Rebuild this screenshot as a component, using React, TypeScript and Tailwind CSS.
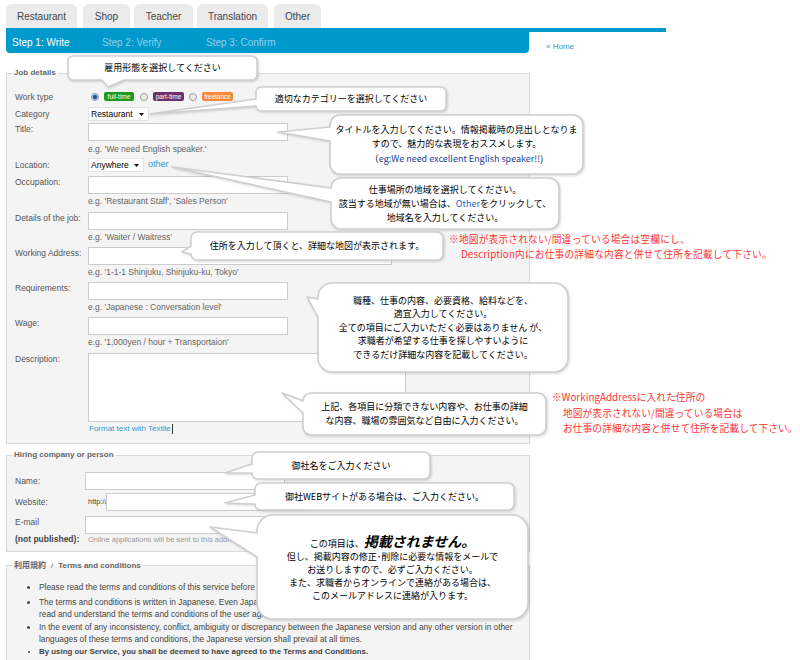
import React from "react";

type Tail = { side: "left" | "bottom"; a: number; b: number; tx: number; ty: number };

function bubblePath(w: number, h: number, r: number, t: Tail) {
  const arcTR = `A${r},${r} 0 0 1 ${w},${r}`;
  const arcBR = `A${r},${r} 0 0 1 ${w - r},${h}`;
  const arcBL = `A${r},${r} 0 0 1 0,${h - r}`;
  const arcTL = `A${r},${r} 0 0 1 ${r},0`;
  if (t.side === "left") {
    return `M${r},0 H${w - r} ${arcTR} V${h - r} ${arcBR} H${r} ${arcBL} V${t.b} L${t.tx},${t.ty} L0,${t.a} V${r} ${arcTL} Z`;
  }
  return `M${r},0 H${w - r} ${arcTR} V${h - r} ${arcBR} H${t.b} L${t.tx},${t.ty} L${t.a},${h} H${r} ${arcBL} V${r} ${arcTL} Z`;
}

function Callout({
  cls,
  w,
  h,
  r,
  tail,
  children,
  textCls = "",
}: {
  cls: string;
  w: number;
  h: number;
  r: number;
  tail: Tail;
  children: React.ReactNode;
  textCls?: string;
}) {
  return (
    <div className={`absolute ${cls}`}>
      <svg
        className="absolute left-0 top-0 overflow-visible drop-shadow-[1px_1px_1px_rgba(0,0,0,0.16)]"
        width={w}
        height={h}
      >
        <path d={bubblePath(w, h, r, tail)} fill="#ffffff" stroke="#cfcfcf" strokeWidth={1.6} strokeLinejoin="round" />
      </svg>
      <div
        className={`relative flex h-full w-full flex-col items-center justify-center text-center text-[9px] text-black font-['Noto_Sans_CJK_JP',sans-serif] ${textCls}`}
      >
        {children}
      </div>
    </div>
  );
}

function Caret() {
  return (
    <svg width="5" height="3" viewBox="0 0 5 3">
      <path d="M0 0H5L2.5 3Z" fill="#111" />
    </svg>
  );
}

function Radio({ checked, cls }: { checked?: boolean; cls: string }) {
  return (
    <span
      className={`flex h-[8px] w-[8px] shrink-0 items-center justify-center rounded-full border border-[#9c9c9c] bg-[#ededed] ${cls}`}
    >
      {checked && <span className="h-[4px] w-[4px] rounded-full bg-[#1d4f91] ring-1 ring-[#8fb4dc]" />}
    </span>
  );
}

const lab = "w-[73px] shrink-0 text-[8.5px] leading-[12px] text-[#555]";
const inp = "h-[18px] border border-[#cccccc] bg-white";
const hint = "ml-[73px] h-[12px] text-[8.5px] leading-[12px] text-[#666]";

const tabs = [
  { label: "Restaurant", cls: "ml-[6px] w-[71px]" },
  { label: "Shop", cls: "ml-[6px] w-[47px]" },
  { label: "Teacher", cls: "ml-[4px] w-[59px]" },
  { label: "Translation", cls: "ml-[4px] w-[71px]" },
  { label: "Other", cls: "ml-[6px] w-[47px]" },
];

export default function App() {
  return (
    <div className="relative h-[660px] w-[800px] overflow-hidden bg-white font-['Liberation_Sans',Arial,sans-serif] text-[#333]">
      {/* Tabs */}
      <div className="flex h-[28px] items-end">
        {tabs.map((t) => (
          <div
            key={t.label}
            className={`flex h-[24px] items-center justify-center rounded-t-[6px] bg-[#ebebeb] text-[10px] text-[#444] ${t.cls}`}
          >
            {t.label}
          </div>
        ))}
      </div>
      <div className="ml-[6px] h-[4px] w-[660px] bg-[#0099cc]" />
      <div className="flex">
        <div className="ml-[6px] flex h-[21px] w-[523px] items-center rounded-b-[4px] bg-[#0099cc] pl-[6px] text-[10px]">
          <span className="w-[90px] text-white">Step 1: Write</span>
          <span className="w-[104px] text-[#8dd0ee]">Step 2: Verify</span>
          <span className="text-[#8dd0ee]">Step 3: Confirm</span>
        </div>
        <span className="ml-[17px] mt-[10px] text-[8px] leading-[10px] text-[#3399cc]">« Home</span>
      </div>

      {/* Job details */}
      <fieldset className="ml-[6px] mt-[14px] w-[524px] border border-[#d9d9d9] bg-[#f4f4f4] pb-[8px] pl-[8px] pr-[8px] pt-[10px]">
        <legend className="-ml-[3px] px-[2px] text-[8px] font-bold leading-[12px] text-[#666]">Job details</legend>

        <div className="flex h-[15px] items-center">
          <div className={lab}>Work type</div>
          <Radio checked cls="ml-[3px]" />
          <span className="ml-[5px] h-[9px] w-[30px] rounded-[2px] bg-[#1e9a1e] text-center text-[6.5px] leading-[9px] text-white">full-time</span>
          <Radio cls="ml-[6px]" />
          <span className="ml-[5px] h-[9px] w-[31px] rounded-[2px] bg-[#6d2f6d] text-center text-[6.5px] leading-[9px] text-white">part-time</span>
          <Radio cls="ml-[5px]" />
          <span className="ml-[5px] h-[9px] w-[31px] rounded-[2px] bg-[#f7883a] text-center text-[6.5px] leading-[9px] text-white">freelance</span>
        </div>

        <div className="mt-[3px] flex h-[14px] items-center">
          <div className={lab}>Category</div>
          <div className="flex h-[14px] w-[61px] items-center justify-between border border-[#e4e4e4] bg-white pl-[2px] pr-[4px] text-[8.5px] text-black">
            Restaurant <Caret />
          </div>
        </div>

        <div className="mt-[2px] flex items-start">
          <div className={lab}>Title:</div>
          <div className={`${inp} w-[200px]`} />
        </div>
        <div className={`${hint} mt-[2px]`}>e.g. 'We need English speaker.'</div>

        <div className="mt-[3px] flex h-[14px] items-center">
          <div className={lab}>Location:</div>
          <div className="flex h-[14px] w-[56px] items-center justify-between border border-[#e4e4e4] bg-white pl-[2px] pr-[4px] text-[8.5px] text-black">
            Anywhere <Caret />
          </div>
          <span className="ml-[4px] text-[9px] text-[#3399cc]">other</span>
        </div>

        <div className="mt-[4px] flex items-start">
          <div className={lab}>Occupation:</div>
          <div className={`${inp} w-[200px]`} />
        </div>
        <div className={`${hint} mt-[1px]`}>e.g. 'Restaurant Staff', 'Sales Person'</div>

        <div className="mt-[5px] flex items-start">
          <div className={lab}>Details of the job:</div>
          <div className={`${inp} w-[200px]`} />
        </div>
        <div className={`${hint} mt-[1px]`}>e.g. 'Waiter / Waitress'</div>

        <div className="mt-[4px] flex items-start">
          <div className={lab}>Working Address:</div>
          <div className={`${inp} w-[304px]`} />
        </div>
        <div className={`${hint} mt-[1px]`}>e.g. '1-1-1 Shinjuku, Shinjuku-ku, Tokyo'</div>

        <div className="mt-[4px] flex items-start">
          <div className={lab}>Requirements:</div>
          <div className={`${inp} w-[200px]`} />
        </div>
        <div className={`${hint} mt-[1px]`}>e.g. 'Japanese : Conversation level'</div>

        <div className="mt-[4px] flex items-start">
          <div className={lab}>Wage:</div>
          <div className={`${inp} w-[200px]`} />
        </div>
        <div className={`${hint} mt-[1px]`}>e.g. '1,000yen / hour + Transportaion'</div>

        <div className="mt-[5px] flex items-start">
          <div className={lab}>Description:</div>
          <div className="h-[69px] w-[318px] border border-[#cccccc] bg-white" />
        </div>
        <div className="ml-[74px] mt-[1px] flex h-[12px] items-center text-[8px] leading-[12px] text-[#3399cc]">
          Format text with Textile
          <span className="ml-[1px] inline-block h-[10px] w-[1px] bg-[#333]" />
        </div>
      </fieldset>

      {/* Hiring company */}
      <fieldset className="ml-[6px] mt-[5px] w-[524px] border border-[#d9d9d9] bg-[#f4f4f4] pb-[6px] pl-[8px] pr-[8px] pt-[11px]">
        <legend className="-ml-[3px] px-[2px] text-[8px] font-bold leading-[12px] text-[#666]">Hiring company or person</legend>

        <div className="flex h-[18px] items-center">
          <div className="w-[70px] shrink-0 text-[8.5px] leading-[12px] text-[#555]">Name:</div>
          <div className={`${inp} w-[200px]`} />
        </div>
        <div className="mt-[3px] flex h-[18px] items-center">
          <div className="w-[70px] shrink-0 text-[8.5px] leading-[12px] text-[#555]">Website:</div>
          <span className="ml-[3px] w-[18px] shrink-0 text-[7.5px] text-[#444]">http://</span>
          <div className={`${inp} w-[200px]`} />
        </div>
        <div className="mt-[5px] flex items-start">
          <div className="w-[70px] shrink-0 text-[8.5px] leading-[12px] text-[#555]">
            <div>E-mail</div>
            <div className="mt-[5px] font-bold text-[#444]">(not published):</div>
          </div>
          <div>
            <div className={`${inp} w-[200px]`} />
            <div className="ml-[3px] mt-[1px] whitespace-nowrap text-[7.5px] leading-[10px] text-[#999]">
              Online applications will be sent to this address.
            </div>
          </div>
        </div>
      </fieldset>

      {/* Terms */}
      <fieldset className="ml-[6px] mt-[7px] w-[524px] border border-[#d9d9d9] bg-[#f4f4f4] pb-[20px] pl-[8px] pr-[8px] pt-[9px]">
        <legend className="-ml-[3px] px-[2px] text-[8px] leading-[12px] text-[#666]">
          <span className="font-bold font-['Noto_Sans_CJK_JP',sans-serif]">利用規約</span>
          <span className="mx-[5px]">/</span>
          <span className="font-bold">Terms and conditions</span>
        </legend>
        <ul className="list-disc whitespace-nowrap pl-[24px] text-[8.3px] leading-[12px] text-[#444]">
          <li>Please read the terms and conditions of this service before using.</li>
          <li className="mt-[3px]">
            The terms and conditions is written in Japanese. Even Japanese users must
            <br />
            read and understand the terms and conditions of the user agreement.
          </li>
          <li className="mt-[1px]">
            In the event of any inconsistency, conflict, ambiguity or discrepancy between the Japanese version and any other version in other
            <br />
            languages of these terms and conditions, the Japanese version shall prevail at all times.
          </li>
          <li className="mt-[1px] text-[7.9px] font-bold">
            By using our Service, you shall be deemed to have agreed to the Terms and Conditions.
          </li>
        </ul>
      </fieldset>

      {/* Annotation callouts */}
      <Callout cls="left-[68px] top-[56px] w-[189px] h-[24px]" w={189} h={24} r={5} tail={{ side: "bottom", a: 34, b: 56, tx: 40, ty: 31 }}>
        <div>雇用形態を選択してください</div>
      </Callout>
      <Callout cls="left-[256px] top-[87px] w-[190px] h-[24px]" w={190} h={24} r={5} tail={{ side: "left", a: 12, b: 19, tx: -106, ty: 27 }}>
        <div>適切なカテゴリーを選択してください</div>
      </Callout>
      <Callout cls="left-[330px] top-[115px] w-[253px] h-[59px]" w={253} h={59} r={10} tail={{ side: "left", a: 12, b: 26, tx: -52, ty: 17 }} textCls="leading-[14.5px]">
        <div>タイトルを入力してください。情報掲載時の見出しとなりま</div>
        <div>すので、魅力的な表現をおススメします。</div>
        <div>
          （<span className="text-[#23409a]">eg:We need excellent English speaker!!</span>)
        </div>
      </Callout>
      <Callout cls="left-[331px] top-[178px] w-[228px] h-[51px]" w={228} h={51} r={10} tail={{ side: "left", a: 10, b: 24, tx: -159, ty: -11 }} textCls="leading-[14px]">
        <div>仕事場所の地域を選択してください。</div>
        <div>
          該当する地域が無い場合は、<span className="text-[#2a5fbf]">Other</span>をクリックして、
        </div>
        <div>地域名を入力してください。</div>
      </Callout>
      <Callout cls="left-[191px] top-[232px] w-[252px] h-[28px]" w={252} h={28} r={6} tail={{ side: "left", a: 14, b: 22, tx: -9, ty: 20 }}>
        <div>住所を入力して頂くと、詳細な地図が表示されます。</div>
      </Callout>
      <Callout cls="left-[318px] top-[283px] w-[250px] h-[89px]" w={250} h={89} r={14} tail={{ side: "left", a: 16, b: 34, tx: -11, ty: 14 }} textCls="leading-[13.5px]">
        <div>職種、仕事の内容、必要資格、給料などを、</div>
        <div>適宜入力してください。</div>
        <div>全ての項目にご入力いただく必要はありません が、</div>
        <div>求職者が希望する仕事を探しやすいように</div>
        <div>できるだけ詳細な内容を記載してください。</div>
      </Callout>
      <Callout cls="left-[303px] top-[393px] w-[243px] h-[42px]" w={243} h={42} r={8} tail={{ side: "left", a: 8, b: 20, tx: -21, ty: 0 }} textCls="leading-[14.5px]">
        <div>上記、各項目に分類できない内容や、お仕事の詳細</div>
        <div>な内容、職場の雰囲気など自由に入力ください。</div>
      </Callout>
      <Callout cls="left-[252px] top-[452px] w-[178px] h-[27px]" w={178} h={27} r={6} tail={{ side: "left", a: 12, b: 21, tx: -27, ty: 21 }}>
        <div>御社名をご入力ください</div>
      </Callout>
      <Callout cls="left-[255px] top-[483px] w-[259px] h-[27px]" w={259} h={27} r={6} tail={{ side: "left", a: 12, b: 21, tx: -30, ty: 20 }}>
        <div>御社WEBサイトがある場合は、ご入力ください。</div>
      </Callout>
      <Callout cls="left-[257px] top-[515px] w-[271px] h-[104px]" w={271} h={104} r={16} tail={{ side: "left", a: 18, b: 42, tx: -47, ty: 12 }} textCls="leading-[13px]">
        <div className="flex items-baseline">
          <span>この項目は、</span>
          <span className="text-[14px] font-bold italic leading-[18px]">掲載されません。</span>
        </div>
        <div>但し、掲載内容の修正･削除に必要な情報をメールで</div>
        <div>お送りしますので、必ずご入力ください。</div>
        <div>また、求職者からオンラインで連絡がある場合は、</div>
        <div>このメールアドレスに連絡が入ります。</div>
      </Callout>

      {/* Red notes */}
      <div className="absolute left-[449px] top-[232px] whitespace-nowrap text-[9.7px] leading-[15px] tracking-[0.2px] text-[#ff3333] font-['Noto_Sans_CJK_JP',sans-serif]">
        <div>※地図が表示されない/間違っている場合は空欄にし、</div>
        <div className="pl-[12px]">Description内にお仕事の詳細な内容と併せて住所を記載して下さい。</div>
      </div>
      <div className="absolute left-[552px] top-[390px] whitespace-nowrap text-[9.7px] leading-[15.5px] tracking-[0.1px] text-[#ff3333] font-['Noto_Sans_CJK_JP',sans-serif]">
        <div>※WorkingAddressに入れた住所の</div>
        <div className="pl-[11px]">地図が表示されない/間違っている場合は</div>
        <div className="pl-[11px]">お仕事の詳細な内容と併せて住所を記載して下さい。</div>
      </div>
    </div>
  );
}
